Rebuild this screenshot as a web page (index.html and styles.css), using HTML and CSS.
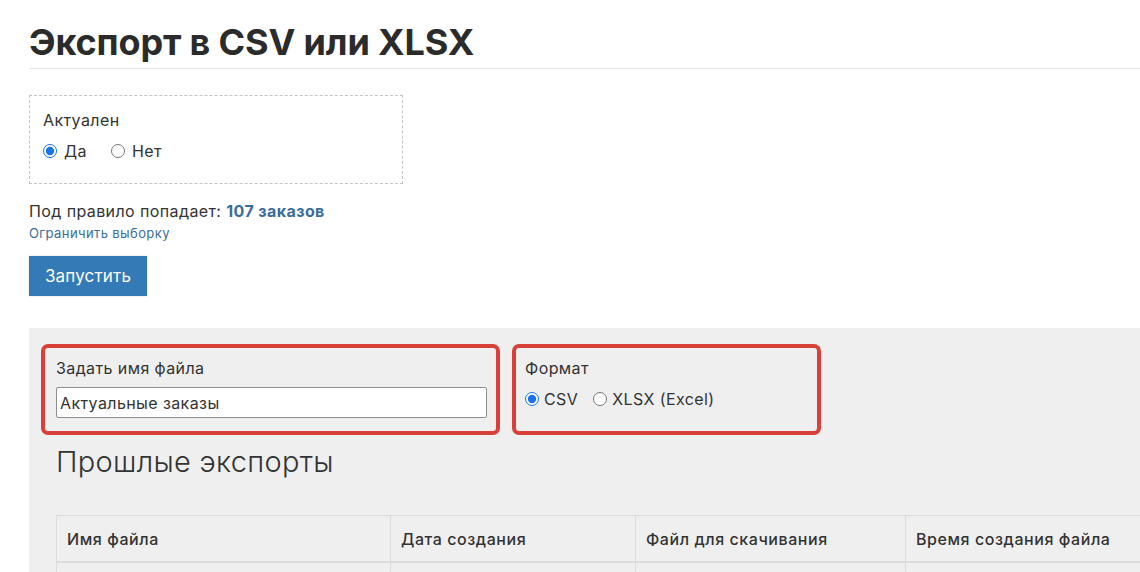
FILE: index.html
```html
<!DOCTYPE html>
<html lang="ru">
<head>
    <meta charset="UTF-8">
    <meta name="viewport" content="width=device-width, initial-scale=1.0">
    <title>Экспорт в CSV или XLSX</title>
    <link rel="stylesheet" href="styles.css">
</head>
<body>
    <div class="page">
        <h1 class="title">Экспорт в CSV или XLSX</h1>

        <fieldset class="filter">
            <div class="filter-label">Актуален</div>
            <div class="radios">
                <label><input type="radio" name="actual" checked> Да</label>
                <label><input type="radio" name="actual"> Нет</label>
            </div>
        </fieldset>

        <p class="count">Под правило попадает: <b>107 заказов</b></p>
        <a class="limit" href="#">Ограничить выборку</a>

        <button class="run" type="button">Запустить</button>

        <div class="panel">
            <div class="options">
                <div class="option option-name">
                    <div class="option-label">Задать имя файла</div>
                    <input class="file-name" type="text" value="Актуальные заказы">
                </div>
                <div class="option option-format">
                    <div class="option-label">Формат</div>
                    <div class="formats">
                        <label><input type="radio" name="format" checked>CSV</label>
                        <label><input type="radio" name="format">XLSX (Excel)</label>
                    </div>
                </div>
            </div>

            <h2 class="past">Прошлые экспорты</h2>

            <table class="exports">
                <colgroup>
                    <col style="width: 334px">
                    <col style="width: 245px">
                    <col style="width: 270px">
                    <col style="width: 300px">
                </colgroup>
                <thead>
                    <tr>
                        <th>Имя файла</th>
                        <th>Дата создания</th>
                        <th>Файл для скачивания</th>
                        <th>Время создания файла</th>
                    </tr>
                </thead>
                <tbody>
                    <tr>
                        <td>&nbsp;</td>
                        <td></td>
                        <td></td>
                        <td></td>
                    </tr>
                </tbody>
            </table>
        </div>
    </div>
</body>
</html>
```

FILE: styles.css
```css
/* Общие стили */
html, body {
  margin: 0;
  overflow: hidden;
}

body {
  font-family: Inter, "Noto Sans", sans-serif;
  font-size: 16px;
  letter-spacing: 0.025em;
  color: #333;
  background: #fff;
}

.page {
  padding-left: 29px;
}

/* Заголовок */
.title {
  margin: 0;
  padding: 22px 0 5px;
  font-size: 36px;
  font-weight: 700;
  letter-spacing: -0.15px;
  line-height: 41px;
  color: #2b2b2b;
  border-bottom: 1px solid #e6e6e6;
}

/* Фильтр */
.filter {
  width: 374px;
  height: 89px;
  box-sizing: border-box;
  margin: 26px 0 0;
  padding: 12px 13px;
  border: 1px dashed #c4c4c4;
}

.filter-label {
  line-height: 24px;
}

.radios {
  display: flex;
  gap: 24px;
  margin-top: 7px;
  line-height: 24px;
}

.radios label {
  display: flex;
  align-items: center;
  gap: 7px;
}

input[type="radio"] {
  margin: 0;
  width: 14px;
  height: 14px;
  accent-color: #1a73e8;
}

.count {
  margin: 16px 0 0;
  line-height: 22px;
}

.count b {
  color: #3a6d9a;
  font-weight: 700;
}

.limit {
  display: block;
  font-size: 13px;
  line-height: 22px;
  color: #3a6d9a;
  text-decoration: none;
}

.run {
  display: block;
  margin-top: 12px;
  width: 118px;
  height: 40px;
  border: 0;
  border-radius: 0;
  background: #337ab7;
  color: #fff;
  font-family: inherit;
  font-size: 17px;
  letter-spacing: 0.01em;
  padding: 0;
  box-shadow: 0 0 2px rgba(0, 0, 0, 0.15);
}

/* Серая панель */
.panel {
  margin-top: 32px;
  background: #efefef;
  padding: 16px 0 0 12px;
  height: 260px;
  overflow: hidden;
}

.options {
  display: flex;
  gap: 12px;
}

.option {
  height: 91px;
  box-sizing: border-box;
  border: 4px solid #d8403a;
  border-radius: 7px;
}

.option-name {
  width: 459px;
  padding: 9px 11px 0;
}

.option-format {
  width: 309px;
  padding: 9px 9px 0;
}

.option-label {
  line-height: 23px;
}

.file-name {
  display: block;
  width: 431px;
  height: 31px;
  box-sizing: border-box;
  margin-top: 7px;
  border: 1px solid #8e8e8e;
  border-radius: 2px;
  padding: 0 3px;
  font-family: inherit;
  font-size: 16px;
  letter-spacing: 0.025em;
  color: #333;
  background: #fff;
}

.formats {
  display: flex;
  gap: 15px;
  margin-top: 9px;
  line-height: 20px;
}

.formats label {
  display: flex;
  align-items: center;
  gap: 5px;
}

.past {
  margin: 9px 0 0 15px;
  font-size: 29px;
  font-weight: 300;
  letter-spacing: 0.01em;
  line-height: 36px;
  color: #333;
}

/* Таблица экспортов */
.exports {
  margin: 35px 0 0 15px;
  border-collapse: collapse;
  table-layout: fixed;
  width: 1149px;
}

.exports th {
  text-align: left;
  font-weight: 500;
  letter-spacing: 0.035em;
  padding: 0 10px;
  height: 45px;
  border: 1px solid #dcdcdc;
  border-bottom: 2px solid #dcdcdc;
}

.exports td {
  height: 40px;
  border: 1px solid #dcdcdc;
}
```
